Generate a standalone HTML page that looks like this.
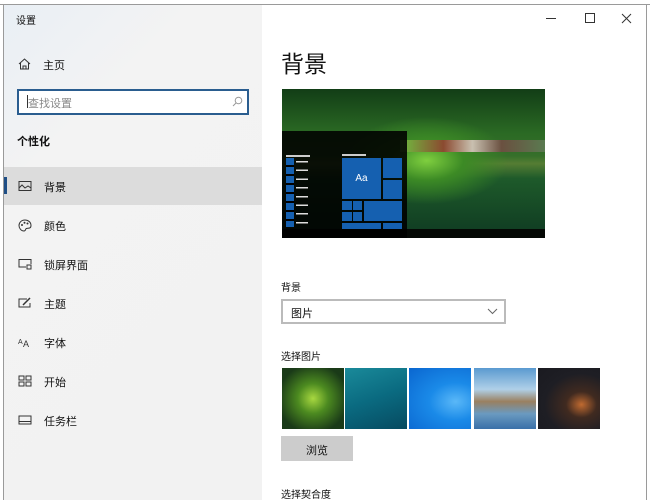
<!DOCTYPE html>
<html><head><meta charset="utf-8"><style>
*{margin:0;padding:0;box-sizing:border-box}
body{width:650px;height:500px;overflow:hidden;background:#fff;font-family:"Liberation Sans","Noto Sans CJK SC",sans-serif;position:relative;color:#111}
.abs{position:absolute}
.side{left:4px;top:5px;width:258px;height:495px;background:linear-gradient(135deg,#e9eff5 0%,#f3f3f3 25%,#f2f2f2 100%)}
.t{font-size:11px;position:absolute}
.item{position:absolute;left:4px;width:258px;height:38px}
.item span{position:absolute;left:40px;top:12px;font-size:11px}
.item svg{position:absolute;left:14px;top:13px}
.thumb{position:absolute;top:368px;width:62px;height:61px}
</style></head><body>
<div class="abs" style="left:0;top:4px;width:650px;height:1px;background:#9a9a9a"></div>
<div class="abs" style="left:3px;top:4px;width:1px;height:496px;background:#9a9a9a"></div>
<div class="abs" style="left:646px;top:4px;width:1px;height:496px;background:#9a9a9a"></div>
<div class="abs side"></div>
<div class="t" style="left:16px;top:12px;font-size:10px">设置</div>
<svg class="abs" style="left:18px;top:58px" width="13" height="12" viewBox="0 0 13 12"><path d="M1 6L6.5 1L12 6M2.5 5V11H10.5V5M5 11V8H8V11" fill="none" stroke="#333" stroke-width="1"/></svg>
<div class="t" style="left:43px;top:57px">主页</div>
<div class="abs" style="left:17px;top:89px;width:232px;height:26px;border:2px solid #2a5d8f;background:#fff"></div>
<div class="abs" style="left:27px;top:95px;width:1px;height:13px;background:#333"></div>
<div class="t" style="left:28px;top:95px;color:#888">查找设置</div>
<svg class="abs" style="left:232px;top:96px" width="11" height="11" viewBox="0 0 11 11"><circle cx="6.5" cy="4.5" r="3.3" fill="none" stroke="#999"/><path d="M4 7L1 10" stroke="#999"/></svg>
<div class="t" style="left:17px;top:133px;font-weight:bold">个性化</div>
<div class="abs" style="left:4px;top:167px;width:258px;height:38px;background:#dcdcdc"></div>
<div class="abs" style="left:4px;top:177px;width:3px;height:17px;background:#1f4e85"></div>
<div class="item" style="top:167px"><svg width="14" height="12" viewBox="0 0 14 12"><rect x="1" y="1.5" width="12" height="9" fill="none" stroke="#333"/><path d="M1 8L4 5L7 8L10 6L13 8" fill="none" stroke="#333"/></svg><span>背景</span></div>
<div class="item" style="top:206px"><svg width="14" height="13" viewBox="0 0 14 13"><path d="M7 1C3 1 1 4 1 6.5S3 12 6 12C8 12 7 10 8.5 9.5S13 10 13 6.5 10 1 7 1Z" fill="none" stroke="#333"/><circle cx="4" cy="6" r="1" fill="#333"/><circle cx="6.5" cy="3.8" r="1" fill="#333"/><circle cx="9.5" cy="4.5" r="1" fill="#333"/></svg><span>颜色</span></div>
<div class="item" style="top:245px"><svg width="14" height="12" viewBox="0 0 14 12"><path d="M8 9H1V1.5H13V6" fill="none" stroke="#333"/><rect x="9" y="7" width="4" height="4" fill="none" stroke="#333"/></svg><span>锁屏界面</span></div>
<div class="item" style="top:284px"><svg width="14" height="12" viewBox="0 0 14 12"><path d="M9 2H1V10H12V6" fill="none" stroke="#333"/><path d="M5 8L12 1" stroke="#333" stroke-width="1.5"/></svg><span>主题</span></div>
<div class="item" style="top:323px"><svg width="14" height="12" viewBox="0 0 14 12"><text x="0" y="8" font-size="7" fill="#333" font-family="Liberation Sans">A</text><text x="5" y="11" font-size="9" fill="#333" font-family="Liberation Sans">A</text></svg><span>字体</span></div>
<div class="item" style="top:362px"><svg width="14" height="12" viewBox="0 0 14 12"><rect x="1" y="1" width="5" height="4" fill="none" stroke="#333"/><rect x="8" y="1" width="5" height="4" fill="none" stroke="#333"/><rect x="1" y="7" width="5" height="4" fill="none" stroke="#333"/><rect x="8" y="7" width="5" height="4" fill="none" stroke="#333"/></svg><span>开始</span></div>
<div class="item" style="top:401px"><svg width="14" height="12" viewBox="0 0 14 12"><rect x="1" y="2" width="12" height="8" fill="none" stroke="#333"/><path d="M1 7.5H13" stroke="#333"/></svg><span>任务栏</span></div>
<div class="abs" style="left:546px;top:18px;width:10px;height:1px;background:#333"></div>
<div class="abs" style="left:585px;top:13px;width:10px;height:10px;border:1px solid #333"></div>
<svg class="abs" style="left:621px;top:13px" width="11" height="11" viewBox="0 0 11 11"><path d="M1 1L10 10M10 1L1 10" stroke="#333"/></svg>
<div class="t" style="left:281px;top:50px;font-size:23px;line-height:28px">背景</div>
<div class="abs" style="left:282px;top:89px;width:263px;height:149px;background:radial-gradient(ellipse at 55% 48%,#7fcf3f 0%,#3c8a25 18%,transparent 40%),linear-gradient(180deg,#123d16 0%,#2b6a24 30%,#366f2a 45%,#557d33 50%,#1e5a2a 60%,#0f3a22 100%)"></div>
<div class="abs" style="left:400px;top:140px;width:145px;height:12px;background:linear-gradient(90deg,#6fbf40,#8b4a30 30%,#c9c0b0 50%,#6a5040 70%,#5a7a50)"></div>
<div class="abs" style="left:282px;top:229px;width:263px;height:9px;background:#050805"></div>
<div class="abs" style="left:282px;top:131px;width:125px;height:107px;background:rgba(0,0,0,0.88)"></div>
<div class="abs" style="left:286px;top:155px;width:24px;height:2px;background:#ccc"></div>
<div class="abs" style="left:342px;top:154px;width:24px;height:2px;background:#ccc"></div>
<div class="abs" style="left:286px;top:158px;width:8px;height:69px;background:repeating-linear-gradient(180deg,#1560b0 0 7px,#000 7px 9px)"></div>
<div class="abs" style="left:296px;top:161px;width:12px;height:64px;background:repeating-linear-gradient(180deg,#ddd 0 1.5px,transparent 1.5px 8.7px)"></div>
<div class="abs" style="left:342px;top:158px;width:39px;height:41px;background:#1560b0;color:#fff;font-size:10px;text-align:center;line-height:41px">Aa</div>
<div class="abs" style="left:383px;top:158px;width:19px;height:20px;background:#1560b0"></div>
<div class="abs" style="left:383px;top:180px;width:19px;height:19px;background:#1560b0"></div>
<div class="abs" style="left:342px;top:201px;width:10px;height:9px;background:#1560b0"></div>
<div class="abs" style="left:353px;top:201px;width:9px;height:9px;background:#1560b0"></div>
<div class="abs" style="left:342px;top:212px;width:10px;height:9px;background:#1560b0"></div>
<div class="abs" style="left:353px;top:212px;width:9px;height:9px;background:#1560b0"></div>
<div class="abs" style="left:364px;top:201px;width:38px;height:20px;background:#1560b0"></div>
<div class="abs" style="left:342px;top:223px;width:39px;height:6px;background:#1560b0"></div>
<div class="abs" style="left:383px;top:223px;width:19px;height:6px;background:#1560b0"></div>
<div class="t" style="left:281px;top:279px;font-size:10px">背景</div>
<div class="abs" style="left:281px;top:299px;width:225px;height:25px;border:2px solid #bbb;background:#fff"></div>
<div class="t" style="left:291px;top:305px">图片</div>
<svg class="abs" style="left:487px;top:308px" width="11" height="7" viewBox="0 0 11 7"><path d="M1 1L5.5 5.5L10 1" fill="none" stroke="#666"/></svg>
<div class="t" style="left:281px;top:348px;font-size:10px">选择图片</div>
<div class="thumb" style="left:282px;background:radial-gradient(ellipse at 50% 50%,#a8d840 0%,#4c8a20 35%,#1a3a18 80%)"></div>
<div class="thumb" style="left:345px;background:linear-gradient(160deg,#1a8a9a,#0a6a80 50%,#064a60)"></div>
<div class="thumb" style="left:409px;background:radial-gradient(ellipse at 75% 55%,#5ab8f8,#1a8ae8 40%,#0a66d0)"></div>
<div class="thumb" style="left:474px;background:linear-gradient(180deg,#5a9ad0,#b0d0e8 35%,#9a8060 55%,#6a9ac0 75%,#3a70a8)"></div>
<div class="thumb" style="left:538px;background:radial-gradient(ellipse at 70% 60%,#c06a30 0%,#402a20 25%,#1e1e24 60%,#1a1a20)"></div>
<div class="abs" style="left:281px;top:436px;width:72px;height:25px;background:#cccccc"></div>
<div class="t" style="left:306px;top:442px">浏览</div>
<div class="t" style="left:281px;top:486px;font-size:10px">选择契合度</div>
</body></html>
